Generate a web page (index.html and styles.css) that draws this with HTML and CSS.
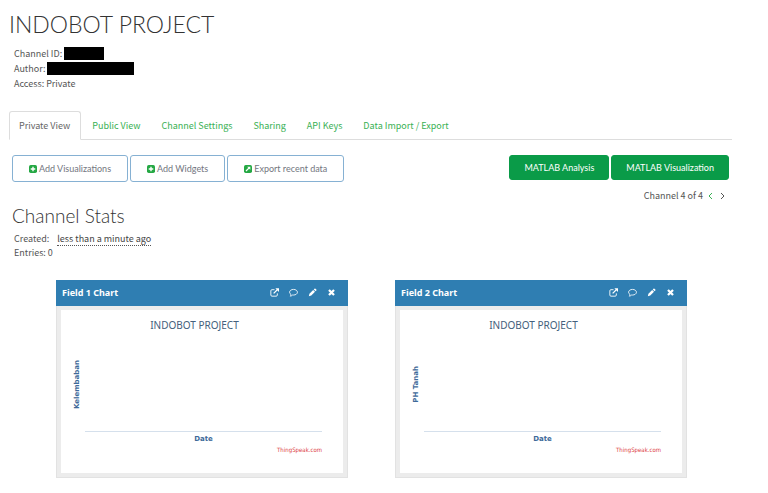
FILE: index.html
```html
<!DOCTYPE html>
<html lang="en">
<head>
<meta charset="utf-8">
<meta name="viewport" content="width=device-width, initial-scale=1">
<title>INDOBOT PROJECT</title>
<link rel="stylesheet" href="styles.css">
</head>
<body>
<svg class="sprite" aria-hidden="true">
  <symbol id="plus" viewBox="0 0 14 14"><rect width="14" height="14" rx="3" fill="currentColor"/><path d="M7 3v8M3 7h8" stroke="#fff" stroke-width="2.4"/></symbol>
  <symbol id="export" viewBox="0 0 14 14"><rect width="14" height="14" rx="3" fill="currentColor"/><path d="M3.5 10.500 9 5" stroke="#fff" stroke-width="2.200"/><path d="M5.500 3H11v5.500z" fill="#fff"/></symbol>
  <symbol id="open" viewBox="0 0 16 16"><path d="M8 3H3.500A2 2 0 0 0 1.500 5v7.500a2 2 0 0 0 2 2H11a2 2 0 0 0 2-2V9.500" fill="none" stroke="currentColor" stroke-width="1.600"/><path d="M6.500 9.500 13 3" stroke="currentColor" stroke-width="2.200"/><path d="M9.500.5H16V7z" fill="currentColor"/></symbol>
  <symbol id="comment" viewBox="0 0 16 16"><path d="M8 2.500c3.900 0 7 2.200 7 5s-3.100 5-7 5l-1.500-.1C5.300 13.600 3.900 14.300 2.300 14.500c.8-.8 1.200-1.700 1.300-2.900C2 10.700 1 9.200 1 7.500c0-2.800 3.100-5 7-5z" fill="none" stroke="currentColor" stroke-width="1.500" stroke-linejoin="round"/></symbol>
  <symbol id="pencil" viewBox="0 0 16 16"><path d="M1.500 14.500l1-4.300L9.200 3.500l3.300 3.300-6.700 6.700zM10.200 2.500l1.300-1.200a1.300 1.300 0 0 1 1.800 0l1.500 1.500a1.300 1.300 0 0 1 0 1.800l-1.300 1.200z" fill="currentColor"/></symbol>
  <symbol id="close" viewBox="0 0 16 16"><path d="M3.500 3.500l9 9M12.500 3.500l-9 9" stroke="currentColor" stroke-width="4"/></symbol>
</svg>
<main class="page">
  <h1>INDOBOT PROJECT</h1>
  <dl class="meta">
    <div><dt>Channel ID:</dt><dd><span class="redacted redacted-id"></span></dd></div>
    <div><dt>Author:</dt><dd><span class="redacted redacted-author"></span></dd></div>
    <div><dt>Access:</dt><dd>Private</dd></div>
  </dl>

  <nav class="tabs">
    <a class="tab active" href="#private">Private View</a>
    <a class="tab" href="#public">Public View</a>
    <a class="tab" href="#settings">Channel Settings</a>
    <a class="tab" href="#sharing">Sharing</a>
    <a class="tab" href="#keys">API Keys</a>
    <a class="tab" href="#data">Data Import / Export</a>
  </nav>

  <div class="toolbar">
    <div class="group">
      <button class="btn" type="button"><svg class="btn-icon"><use href="#plus"/></svg>Add Visualizations</button>
      <button class="btn" type="button"><svg class="btn-icon"><use href="#plus"/></svg>Add Widgets</button>
      <button class="btn" type="button"><svg class="btn-icon"><use href="#export"/></svg>Export recent data</button>
    </div>
    <div class="group">
      <button class="btn primary" type="button">MATLAB Analysis</button>
      <button class="btn primary" type="button">MATLAB Visualization</button>
    </div>
  </div>

  <div class="pager">
    <span>Channel 4 of 4</span>
    <a class="prev" href="#prev" aria-label="Previous channel"><svg viewBox="0 0 5 8"><path d="M4 1 1 4l3 3"/></svg></a>
    <a class="next" href="#next" aria-label="Next channel"><svg viewBox="0 0 5 8"><path d="m1 1 3 3-3 3"/></svg></a>
  </div>

  <h2>Channel Stats</h2>
  <dl class="meta stats">
    <div><dt>Created:</dt><dd><abbr>less than a minute ago</abbr></dd></div>
    <div><dt>Entries:</dt><dd>0</dd></div>
  </dl>

  <div class="charts">
    <section class="card">
      <header class="card-head">
        <h3>Field 1 Chart</h3>
        <div class="tools">
          <button type="button" aria-label="Open"><svg><use href="#open"/></svg></button>
          <button type="button" aria-label="Comment"><svg><use href="#comment"/></svg></button>
          <button type="button" aria-label="Edit"><svg><use href="#pencil"/></svg></button>
          <button type="button" aria-label="Close"><svg><use href="#close"/></svg></button>
        </div>
      </header>
      <div class="chart">
        <h4>INDOBOT PROJECT</h4>
        <div class="plot"><span class="y-label">Kelembaban</span><div class="area"></div></div>
        <div class="x-label">Date</div>
        <a class="credit" href="#thingspeak">ThingSpeak.com</a>
      </div>
    </section>
    <section class="card">
      <header class="card-head">
        <h3>Field 2 Chart</h3>
        <div class="tools">
          <button type="button" aria-label="Open"><svg><use href="#open"/></svg></button>
          <button type="button" aria-label="Comment"><svg><use href="#comment"/></svg></button>
          <button type="button" aria-label="Edit"><svg><use href="#pencil"/></svg></button>
          <button type="button" aria-label="Close"><svg><use href="#close"/></svg></button>
        </div>
      </header>
      <div class="chart">
        <h4>INDOBOT PROJECT</h4>
        <div class="plot"><span class="y-label">PH Tanah</span><div class="area"></div></div>
        <div class="x-label">Date</div>
        <a class="credit" href="#thingspeak">ThingSpeak.com</a>
      </div>
    </section>
  </div>
</main>
</body>
</html>
```
FILE: styles.css
```css
* { box-sizing: border-box; }

body {
  margin: 0;
  background: #fff;
  color: #555;
  font: 9px/15px "Noto Sans CJK SC", "Noto Sans", sans-serif;
}

h1, h2, h3, h4, dl, dd { margin: 0; }
a { text-decoration: none; }
.sprite { display: none; }

.page { padding: 9px 36px 15px 9px; }

h1 {
  color: #333;
  font: 300 23px/30px Lato, sans-serif;
}

.meta { padding: 7px 5px 0; }
.meta > div { display: flex; gap: 2px; }

.redacted {
  display: block;
  height: 13px;
  margin-top: 1px;
  background: #000;
}
.redacted-id { width: 40px; }
.redacted-author { width: 87px; }

.tabs {
  display: flex;
  gap: 1px;
  margin-top: 20px;
  border-bottom: 1px solid #ddd;
}
.tab {
  margin-bottom: -1px;
  padding: 6px 9px;
  border: 1px solid transparent;
  border-radius: 3px 3px 0 0;
  color: #39b054;
}
.tab.active {
  border-color: #ddd #ddd #fff;
  color: #666;
  padding-right: 10px;
}

.toolbar {
  display: flex;
  justify-content: space-between;
  align-items: flex-start;
  margin-top: 15px;
  padding: 0 3px;
}
.group { display: flex; gap: 2px; }

.btn {
  display: flex;
  align-items: center;
  gap: 2px;
  padding: 4px 16px;
  border: 1px solid #86b1d3;
  border-radius: 3px;
  background: #fff;
  color: #737680;
  font: 9px/17px Lato, sans-serif;
}
.btn-icon {
  width: 8px;
  height: 8px;
  color: #25a844;
}
.btn.primary {
  padding: 3px 14px;
  border-color: #0a9b48;
  background: #0a9b48;
  color: #fff;
}

.pager {
  display: flex;
  justify-content: flex-end;
  align-items: center;
  gap: 5px;
  margin-top: 6px;
  padding-right: 7px;
}
.pager a { display: flex; }
.pager svg {
  width: 5px;
  height: 8px;
  fill: none;
  stroke: currentColor;
}
.prev { color: #39b054; }
.next { margin-left: 2px; color: #555; }

h2 {
  padding: 1px 0 0 3px;
  color: #333;
  font: 300 19px/24px Lato, sans-serif;
}
.stats { padding-top: 4px; line-height: 14px; }
.stats abbr {
  margin-left: 6px;
  border-bottom: 1px dotted #555;
  color: #444;
}

.charts {
  display: grid;
  grid-template-columns: 1fr 1fr;
  gap: 47px;
  padding: 20px 45px 0 47px;
}
.card {
  border: 1px solid #e2e2e2;
  background: #ececec;
}
.card-head {
  display: flex;
  justify-content: space-between;
  align-items: center;
  height: 26px;
  margin: -1px -1px 0;
  padding: 0 12px 2px 6px;
  background: #2f7eb2;
  color: #fff;
}
h3 { font: 700 9px/15px "Noto Sans", sans-serif; }
.tools { display: flex; gap: 10px; }
.tools button {
  display: flex;
  padding: 0;
  border: 0;
  background: none;
  color: #fff;
}
.tools svg { width: 9px; height: 9px; }

.chart {
  display: flex;
  flex-direction: column;
  margin: 4px;
  padding: 8px 21px 19px 11px;
  background: #fff;
  color: #3e6a99;
}
h4 {
  padding-right: 5px;
  color: #44607c;
  font: 400 10px/15px "Noto Sans", sans-serif;
  text-align: center;
}
.plot {
  display: flex;
  align-items: center;
  gap: 3px;
  height: 99px;
}
.y-label {
  width: 10px;
  padding-bottom: 3px;
  font: 700 7px/10px "DejaVu Sans", sans-serif;
  writing-mode: vertical-rl;
  transform: rotate(180deg);
  text-align: center;
}
.area {
  flex: 1;
  align-self: stretch;
  border-bottom: 1px solid #d5e0ec;
}
.x-label {
  padding-left: 13px;
  font: 700 7px/14px "DejaVu Sans", sans-serif;
  text-align: center;
}
.credit {
  align-self: flex-end;
  color: #dc3b40;
  font: 6px/8px "DejaVu Sans Condensed", "DejaVu Sans", sans-serif;
}
```
